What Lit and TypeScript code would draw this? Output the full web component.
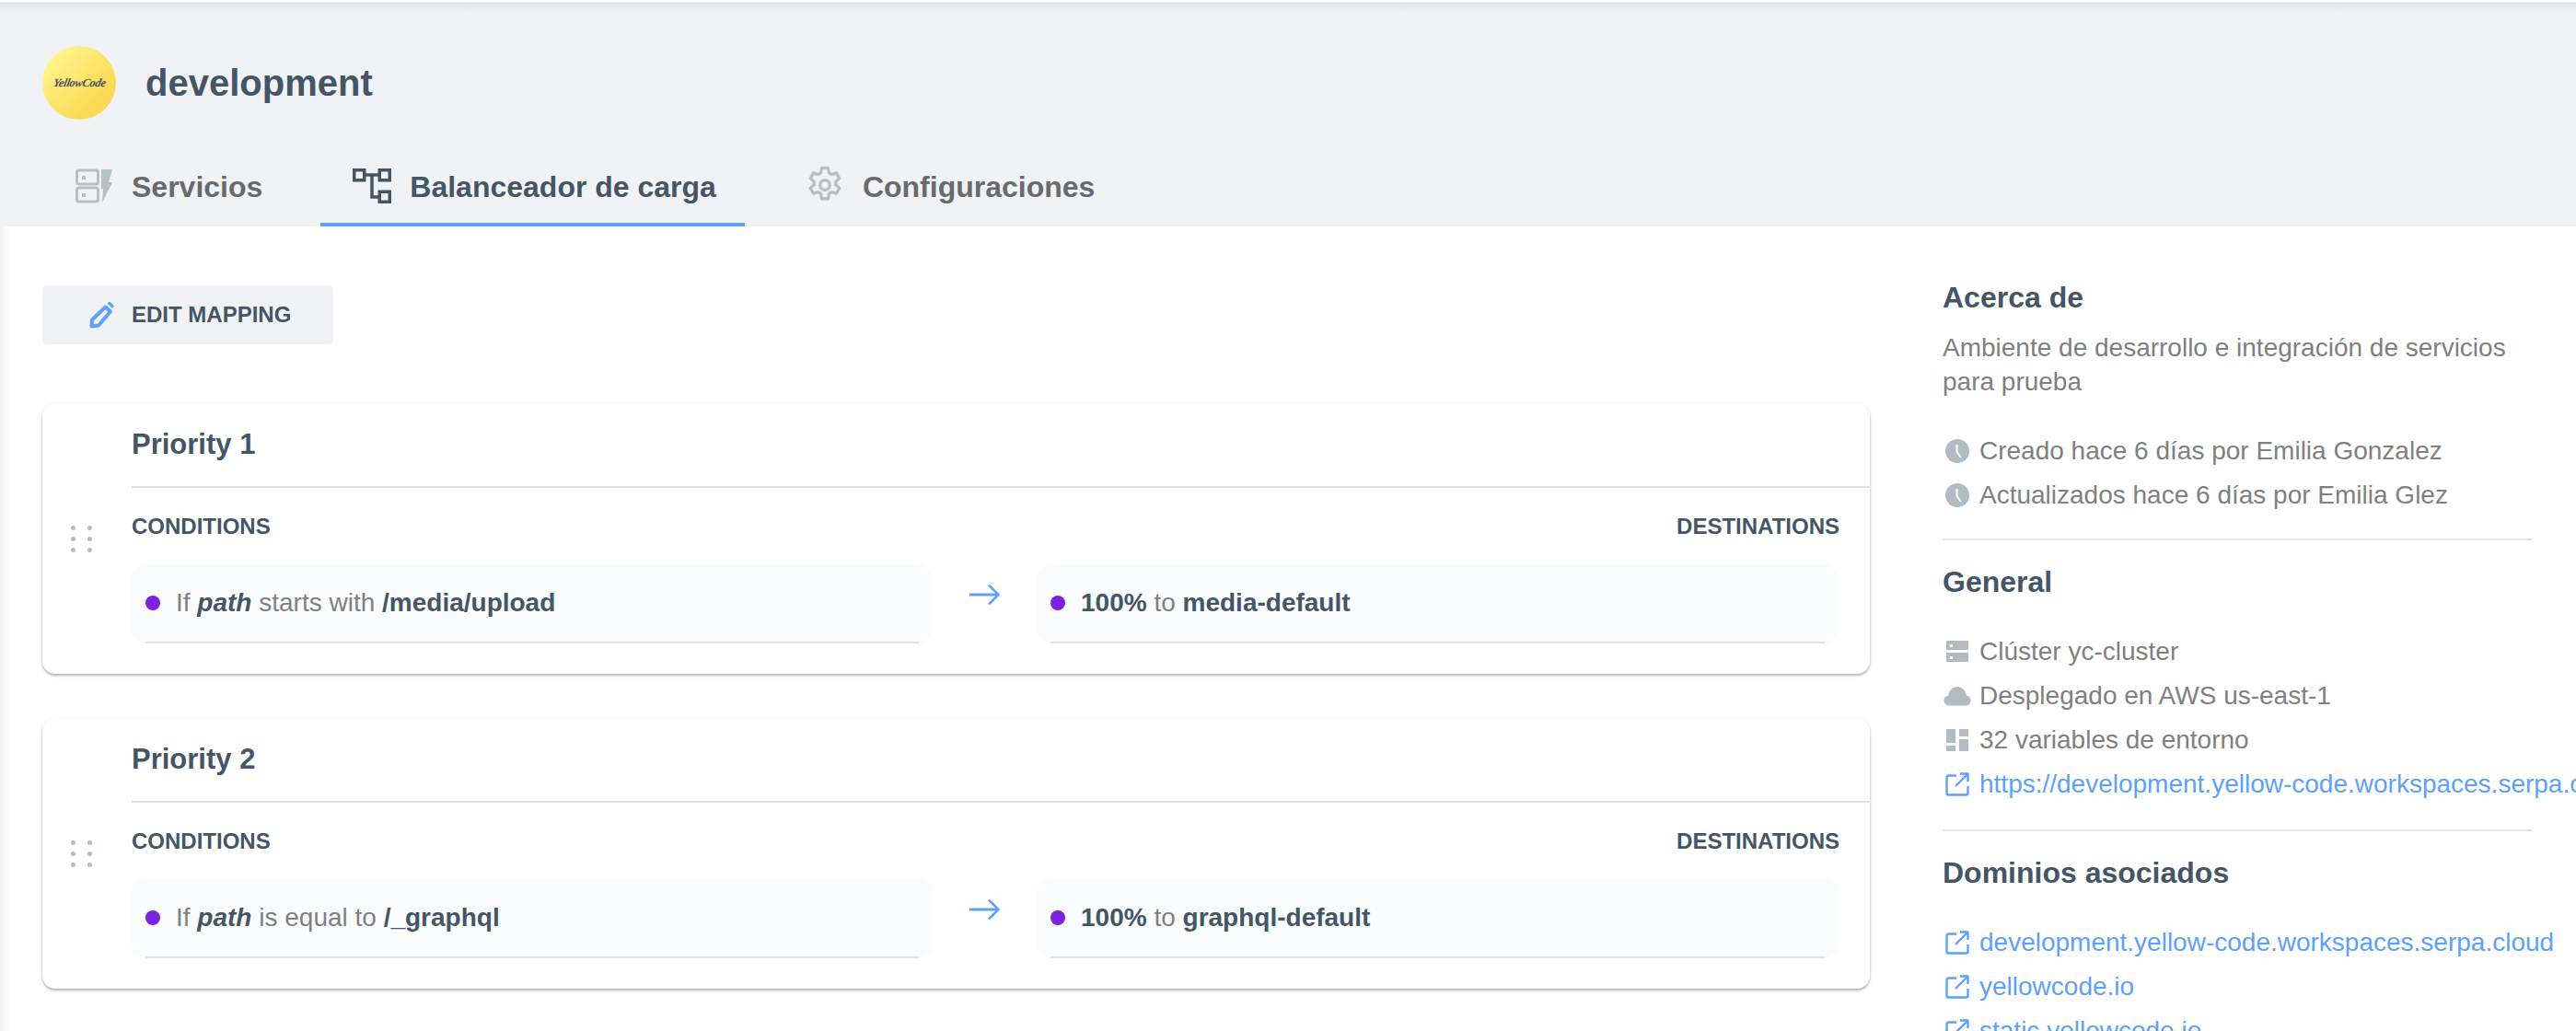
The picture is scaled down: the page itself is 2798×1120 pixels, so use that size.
import { LitElement, html, css } from "lit";
import { customElement } from "lit/decorators.js";

const clock = html`<svg class="ic" viewBox="0 0 26 26"><circle cx="13" cy="13" r="13" fill="#b1bcc2"/><path d="M12.5 6v8l4.5 6" fill="none" stroke="#fff" stroke-width="2"/></svg>`;
const server = html`<svg class="ic" viewBox="0 0 26 26"><path fill="#b1bcc2" fill-rule="evenodd" d="M2 1h22a1 1 0 0 1 1 1v9H1V2a1 1 0 0 1 1-1zm3 4v3h3V5zM1 14h24v9a1 1 0 0 1-1 1H2a1 1 0 0 1-1-1zm4 4v3h3v-3z"/></svg>`;
const cloud = html`<svg class="ic wide" viewBox="0 0 30 22"><path fill="#b1bcc2" d="M6 21.500a5.500 5.500 0 0 1-1-10.900C6 4.500 10.500 1 15 1s9 3.500 10 9.600a5.500 5.500 0 0 1-1 10.900z"/></svg>`;
const dash = html`<svg class="ic" viewBox="0 0 26 26"><path fill="#b1bcc2" d="M1 1h10v15H1zM15 1h10v8H15zM15 12h10v13H15zM1 19h10v6H1z"/></svg>`;
const ext = html`<svg class="ic" viewBox="0 0 26 26"><path fill="none" stroke="#5ea1f6" stroke-width="2.400" stroke-linejoin="round" d="M12 3.500H3.500a2 2 0 0 0-2 2v17a2 2 0 0 0 2 2h19a2 2 0 0 0 2-2V15M16 1.500h8.500V10M24.500 1.500L11 15"/></svg>`;

const rule = (a: unknown) => html`<div class="rule"><i class="dot"></i><span>${a}</span></div>`;

@customElement("app-root")
export class AppRoot extends LitElement {
  static styles = css`
    :host { display: block; width: 2798px; height: 1120px; overflow: hidden; background: #fff; font-family: "Liberation Sans", Arial, sans-serif; color: #445665; }
    svg { display: block; flex: none; }
    .head { height: 246px; background: linear-gradient(#fff 0, #fff 2px, #e3e4e6 3px, #f0f2f6 14px); box-sizing: border-box; padding: 50px 0 0 0; }
    .brand { display: flex; align-items: center; gap: 32px; padding-left: 46px; height: 80px; }
    .logo { width: 80px; height: 80px; border-radius: 50%; background: linear-gradient(135deg, #fff48a 15%, #fbd955 75%); display: flex; align-items: center; justify-content: center; color: #47505c; }
    .logo span { font: italic 700 12.500px "Liberation Serif", serif; letter-spacing: -0.300px; white-space: nowrap; transform: skewX(-12deg); }
    .title { font-size: 40px; font-weight: 700; }
    .tabs { display: flex; gap: 32px; padding-left: 47px; margin-top: 46px; }
    .tab { display: flex; align-items: flex-start; height: 70px; box-sizing: border-box; padding: 7px 31px 0 35px; gap: 21px; font-size: 32px; font-weight: 700; color: #686b6d; line-height: 40px; }
    .tab.on { color: #445665; border-bottom: 4px solid #5ea1f6; }
    .body { display: flex; padding-left: 46px; background: linear-gradient(90deg, #f1f1f1, #fff 10px); height: 874px; }
    .main { width: 1985px; flex: none; padding-top: 64px; }
    .btn { width: 316px; height: 64px; border-radius: 5px; background: #f0f2f6; display: flex; align-items: center; box-sizing: border-box; padding-left: 51px; gap: 18px; font-size: 24px; font-weight: 700; margin-bottom: 64px; }
    .card { height: 294px; border-radius: 14px; background: #fff; box-shadow: 0 2px 3px rgba(0,0,0,.3), 0 0 2px rgba(0,0,0,.07); display: flex; margin-bottom: 48px; box-sizing: border-box; }
    .grip { width: 97px; flex: none; display: grid; grid-template-columns: 5px 5px; grid-auto-rows: 5px; gap: 7px 13px; align-content: start; padding: 133px 0 0 31px; box-sizing: border-box; }
    .grip i { background: #b1bcc2; border-radius: 50%; }
    .inner { flex: 1; min-width: 0; }
    .ph { height: 90px; border-bottom: 2px solid #e2e2e2; font-size: 31px; font-weight: 700; line-height: 90px; }
    .labels { display: flex; justify-content: space-between; padding-right: 33px; font-size: 24px; font-weight: 700; line-height: 28px; margin-top: 28px; margin-bottom: 27px; }
    .rows { display: flex; align-items: flex-start; padding-right: 33px; }
    .rowbox { height: 86px; border-radius: 16px; background: #fafbfc; padding: 0 15px; box-sizing: border-box; }
    .rowbox.l { width: 870px; }
    .rowbox.r { width: 871px; }
    .rule { height: 84px; border-bottom: 2px solid #e2e2e2; display: flex; align-items: center; gap: 17px; font-size: 28px; color: #7f8080; }
    .rule b { color: #445665; }
    .dot { width: 16px; height: 16px; border-radius: 50%; background: #7a22dd; flex: none; }
    .arrow { width: 113px; flex: none; display: flex; justify-content: center; padding-top: 22px; }
    .side { margin-left: 79px; width: 640px; flex: none; padding-top: 57px; font-size: 28px; color: #7f8080; }
    .side h3 { margin: 0; font-size: 32px; font-weight: 700; color: #445665; line-height: 40px; }
    .about { margin: 16px 0 33px; line-height: 37px; }
    .it { display: flex; align-items: center; gap: 11px; height: 48px; white-space: nowrap; padding-left: 3px; }
    .it.link { color: #5ea1f6; }
    .ic { width: 26px; height: 26px; }
    .ic.wide { width: 30px; height: 22px; margin: 0 -2px; }
    hr { border: 0; height: 2px; background: #e2e2e2; margin: 0; }
    .s1 { margin-top: 23px; margin-bottom: 25px; }
    .s2 { margin-top: 25px; margin-bottom: 25px; }
    .sp1 { height: 32px; }
    .sp2 { height: 32px; }
  `;

  private card(title: string, left: unknown, right: unknown) {
    return html`<div class="card">
      <div class="grip">${[0,1,2,3,4,5].map(() => html`<i></i>`)}</div>
      <div class="inner">
        <div class="ph">${title}</div>
        <div class="labels"><span>CONDITIONS</span><span>DESTINATIONS</span></div>
        <div class="rows">
          <div class="rowbox l">${left}</div>
          <div class="arrow"><svg width="33" height="22" viewBox="0 0 33 22"><path d="M0 11h31.500" fill="none" stroke="#5ea1f6" stroke-width="3"/><path d="M21 .5l10.500 10.500L21 21.500" fill="none" stroke="#5ea1f6" stroke-width="2.500"/></svg></div>
          <div class="rowbox r">${right}</div>
        </div>
      </div>
    </div>`;
  }

  render() {
    return html`
      <div class="head">
        <div class="brand"><div class="logo"><span>YellowCode</span></div><div class="title">development</div></div>
        <div class="tabs">
          <div class="tab">
            <svg width="40" height="38" viewBox="0 0 40 38"><g fill="none" stroke="#b6c0c5" stroke-width="3"><rect x="1.500" y="2" width="23" height="15" rx="2.500"/><rect x="1.500" y="21" width="23" height="15" rx="2.500"/></g><path fill="#b6c0c5" d="M7 8h4v4H7zM7 27h4v4H7zM28 1h12l-4 14h4L29 37l1-15h-2z"/></svg>
            <span>Servicios</span>
          </div>
          <div class="tab on">
            <svg width="42" height="38" viewBox="0 0 42 38" style="margin-right:-1px"><g fill="none" stroke="#445665" stroke-width="3.500"><rect x="1.750" y="1.750" width="11" height="11"/><rect x="29.250" y="1.750" width="11" height="11"/><rect x="29.250" y="25.250" width="11" height="11"/><path d="M13 7h16M21 7v24h8"/></g></svg>
            <span>Balanceador de carga</span>
          </div>
          <div class="tab">
            <svg width="40" height="40" viewBox="0 0 24 24" style="margin-top:-2px"><path fill="none" stroke="#b6c0c5" stroke-width="2" stroke-linejoin="round" d="M9.900 1h4.200l.5 3 1.900 1.100 2.900-1 2.100 3.600-2.400 2 0 2.200 2.400 2-2.100 3.600-2.900-1-1.900 1.100-.5 3.400H9.900l-.5-3.400-1.900-1.100-2.900 1-2.100-3.600 2.400-2 0-2.200-2.400-2 2.100-3.600 2.900 1L9.400 4z"/><circle cx="12" cy="12" r="3.200" fill="none" stroke="#b6c0c5" stroke-width="2"/></svg>
            <span>Configuraciones</span>
          </div>
        </div>
      </div>
      <div class="body">
        <div class="main">
          <div class="btn">
            <svg width="28" height="30" viewBox="0 0 28 30"><path fill="#5ea1f6" stroke="#5ea1f6" stroke-width="1" stroke-linejoin="round" d="M20 2.500l2-1.500 4.500 4-1.500 2.500z"/><path fill="none" stroke="#5ea1f6" stroke-width="4" stroke-linejoin="round" d="M17.500 6.500l5.500 5L10 26.500l-7.500 1 .5-7z"/></svg>
            <span>EDIT MAPPING</span>
          </div>
          ${this.card("Priority 1",
            rule(html`If <b><i>path</i></b> starts with <b>/media/upload</b>`),
            rule(html`<b>100%</b> to <b>media-default</b>`)
          )}
          ${this.card("Priority 2",
            rule(html`If <b><i>path</i></b> is equal to <b>/_graphql</b>`),
            rule(html`<b>100%</b> to <b>graphql-default</b>`)
          )}
        </div>
        <div class="side">
          <h3>Acerca de</h3>
          <div class="about">Ambiente de desarrollo e integración de servicios<br />para prueba</div>
          <div class="it">${clock}<span>Creado hace 6 días por Emilia Gonzalez</span></div>
          <div class="it">${clock}<span>Actualizados hace 6 días por Emilia Glez</span></div>
          <hr class="s1" />
          <h3>General</h3>
          <div class="sp1"></div>
          <div class="it">${server}<span>Clúster yc-cluster</span></div>
          <div class="it">${cloud}<span>Desplegado en AWS us-east-1</span></div>
          <div class="it">${dash}<span>32 variables de entorno</span></div>
          <div class="it link">${ext}<span>https://development.yellow-code.workspaces.serpa.cloud</span></div>
          <hr class="s2" />
          <h3>Dominios asociados</h3>
          <div class="sp2"></div>
          <div class="it link">${ext}<span>development.yellow-code.workspaces.serpa.cloud</span></div>
          <div class="it link">${ext}<span>yellowcode.io</span></div>
          <div class="it link">${ext}<span>static.yellowcode.io</span></div>
        </div>
      </div>
    `;
  }
}
